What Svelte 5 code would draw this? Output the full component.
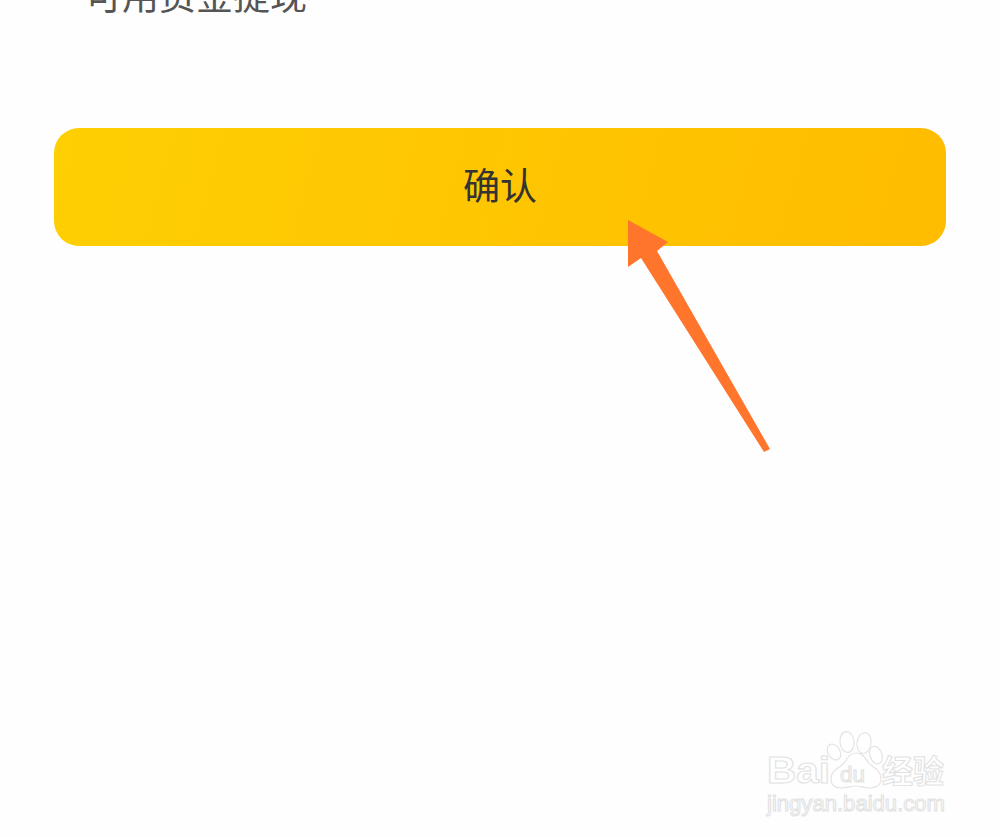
<script lang="ts">
	const cjk = "'Noto Sans CJK SC', sans-serif";
	const latin = "'Liberation Sans', sans-serif";
</script>

<div class="page">
	<p class="label">可用资金提现</p>

	<div class="confirm-wrap">
		<button class="confirm">确认</button>
	</div>

	<svg class="arrow" width="1000" height="837" viewBox="0 0 1000 837" aria-hidden="true">
		<polygon points="628,220 668,242 657,251 770,449 764,452 641,258 628,267" fill="#ff752b" />
	</svg>

	<svg class="watermark" width="230" height="110" viewBox="0 0 230 110" aria-hidden="true">
		<g fill="#fff" stroke="#e4e4e4" stroke-width="1.2">
			<ellipse cx="94" cy="32" rx="6" ry="8.5" transform="rotate(-30 94 32)" />
			<ellipse cx="107" cy="22" rx="7" ry="10.5" transform="rotate(-6 107 22)" />
			<ellipse cx="124" cy="23" rx="7" ry="10.5" transform="rotate(8 124 23)" />
			<ellipse cx="136" cy="35" rx="6" ry="9" transform="rotate(-20 136 35)" />
			<path d="M116 33c6 0 9 4 12 9 3 5 13 7 13 17 0 6-5 9-11 9-6 0-9-2-14-2-5 0-9 2-15 2-6 0-10-3-10-9 0-10 11-12 14-17 3-5 5-9 11-9z" />
		</g>
		<g stroke="#e2e2e2" stroke-width="1.1" fill="#fff">
			<text x="27" y="63" font-size="37" font-family={latin} font-weight="700" textLength="63" lengthAdjust="spacingAndGlyphs">Bai</text>
			<text x="100" y="62" font-size="22" font-family={latin} textLength="25" lengthAdjust="spacingAndGlyphs">du</text>
			<text x="142" y="63" font-size="32" font-family={cjk} font-weight="700" textLength="62" lengthAdjust="spacingAndGlyphs">经验</text>
			<text x="27" y="91" font-size="22" font-family={latin} textLength="178" lengthAdjust="spacingAndGlyphs">jingyan.baidu.com</text>
		</g>
	</svg>
</div>

<style>
	:global(body) {
		margin: 0;
		background: #fefefe;
	}

	.page {
		position: relative;
		height: 837px;
		overflow: hidden;
		background: #fefefe;
		font-family: 'Noto Sans CJK SC', sans-serif;
	}

	.label {
		margin: -32px 0 0 85px;
		font-size: 37px;
		line-height: 52px;
		color: #555;
	}

	.confirm-wrap {
		margin-top: 108px;
		padding: 0 54px;
	}

	.confirm {
		display: block;
		width: 100%;
		height: 118px;
		border: 0;
		border-radius: 25px;
		padding: 0 0 6px;
		background: linear-gradient(105deg, #fecf03, #ffbc00);
		font-family: inherit;
		font-size: 37px;
		color: #333;
	}

	.arrow {
		position: absolute;
		left: 0;
		top: 0;
	}

	.watermark {
		position: absolute;
		left: 740px;
		top: 720px;
	}
</style>
